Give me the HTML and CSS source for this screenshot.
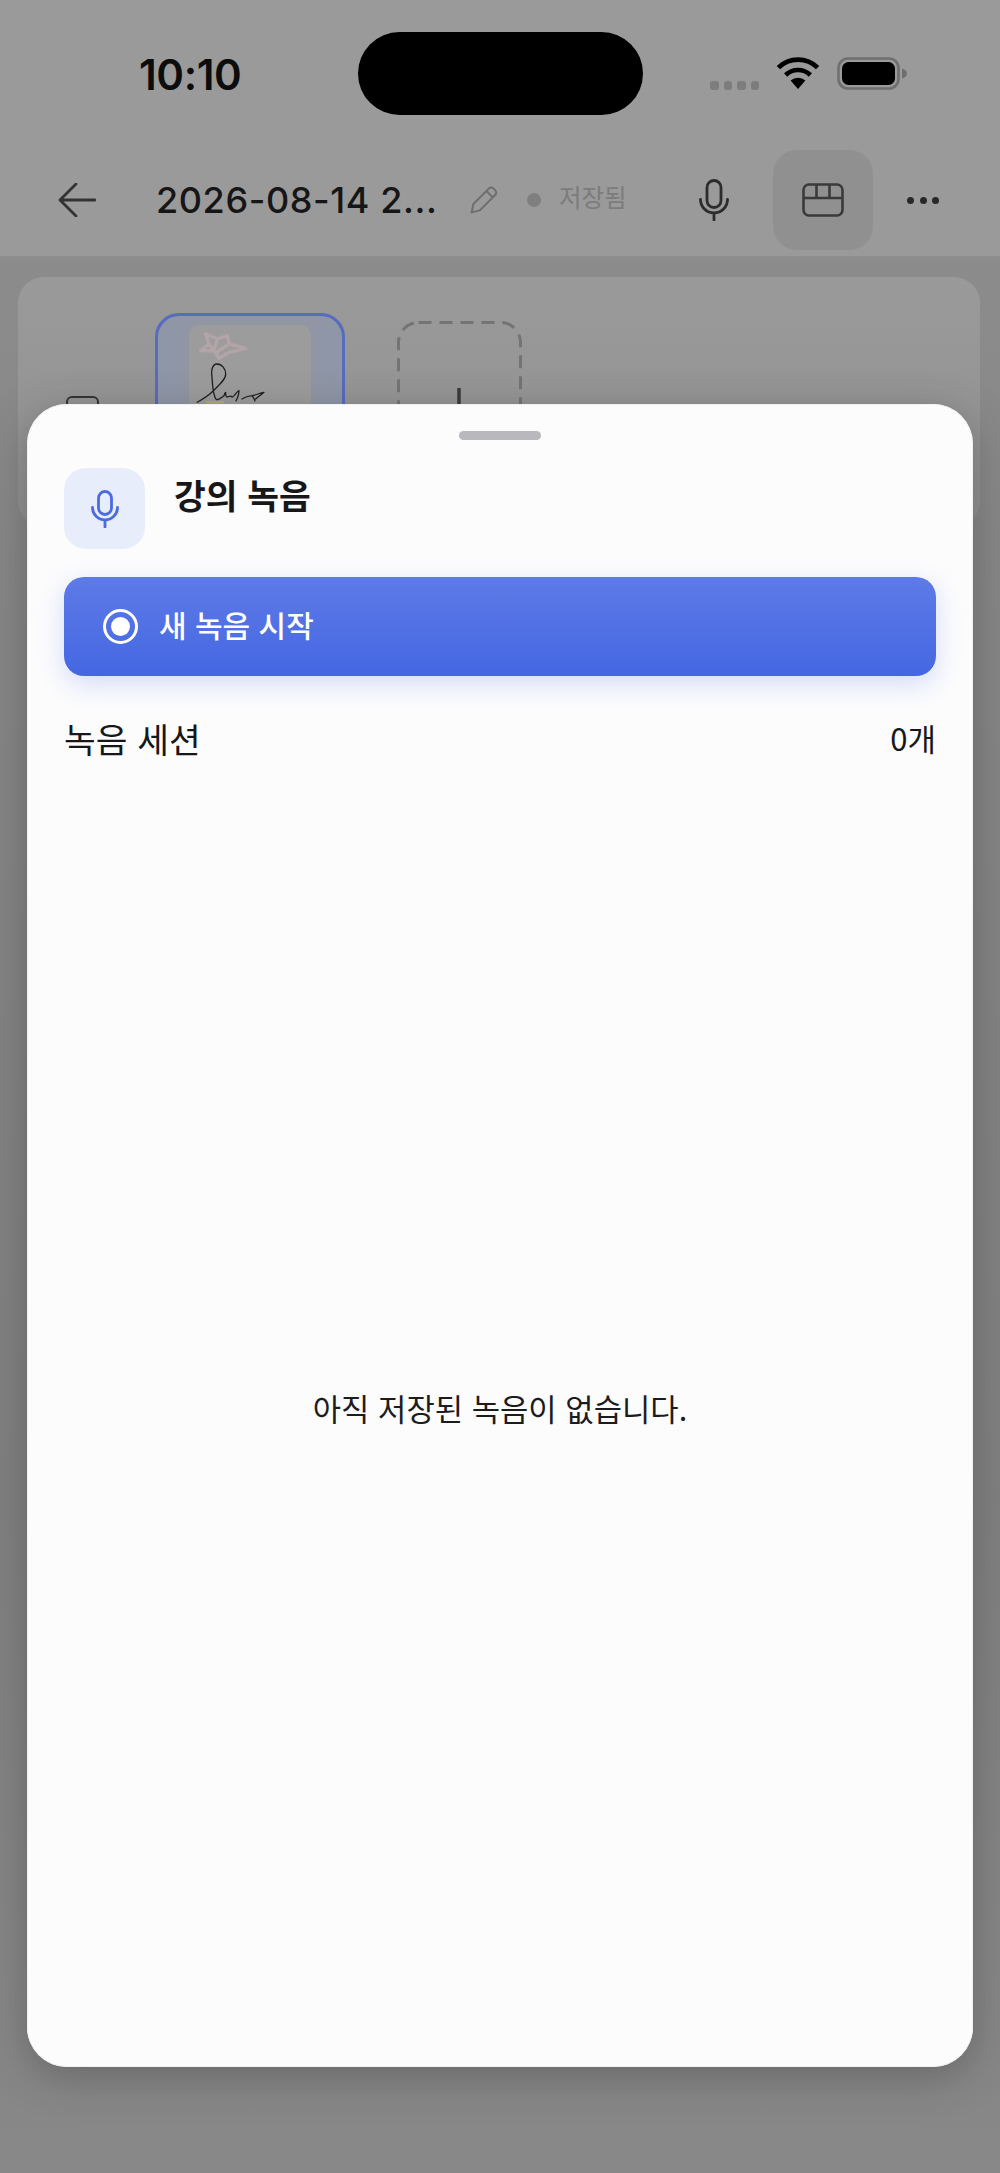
FILE: index.html
```html
<!DOCTYPE html>
<html lang="ko">
<head>
<meta charset="utf-8">
<title>강의 녹음</title>
<link rel="stylesheet" href="styles.css">
</head>
<body>
<div class="page">
  <div class="top">
    <div class="status">
      <span class="time">10:10</span>
      <div class="island"></div>
      <div class="status-icons">
        <div class="signal"><i></i><i></i><i></i><i></i></div>
        <svg class="wifi" viewBox="0 0 44 32"><path d="M22 32 L14.6 23.6 A11 11 0 0 1 29.4 23.6 Z" fill="#000"/><path d="M9.6 18 A18 18 0 0 1 34.4 18" fill="none" stroke="#000" stroke-width="4.6"/><path d="M2.4 10.6 A28 28 0 0 1 41.6 10.6" fill="none" stroke="#000" stroke-width="4.8"/></svg>
        <svg class="battery" viewBox="0 0 71 33"><rect x="1.5" y="1.5" width="60" height="30" rx="9.5" fill="none" stroke="#6f6f6f" stroke-width="2.6"/><rect x="5" y="5" width="53" height="23" rx="6.5" fill="#000"/><path d="M65 11.5 C68.5 12.5 70 14.5 70 16.5 C70 18.5 68.5 20.5 65 21.5 Z" fill="#6f6f6f"/></svg>
      </div>
    </div>
    <div class="toolbar">
      <svg class="back" viewBox="0 0 38 34"><path d="M37 17H2M18 1 2 17l16 16" fill="none" stroke="#333" stroke-width="2.8" stroke-linecap="round" stroke-linejoin="round"/></svg>
      <span class="doc-title">2026-08-14 2...</span>
      <svg class="pencil" viewBox="0 0 28 28"><path d="M1.6 26.4 3.4 18 18.8 2.6a3.4 3.4 0 0 1 4.8 0l1.6 1.6a3.4 3.4 0 0 1 0 4.8L9.8 24.4ZM16.4 5l6.6 6.6" fill="none" stroke="#6e6e6e" stroke-width="2" stroke-linejoin="round"/></svg>
      <span class="saved-dot"></span>
      <span class="saved">저장됨</span>
      <svg class="mic" viewBox="0 0 30 42"><rect x="8" y="1.5" width="14" height="27" rx="7" fill="none" stroke="#2c2c2c" stroke-width="2.8"/><path d="M1.5 20.5a13.5 13.5 0 0 0 27 0M15 34.5V41" fill="none" stroke="#2c2c2c" stroke-width="2.8" stroke-linecap="round"/></svg>
      <div class="layout-btn">
        <svg class="layout" viewBox="0 0 42 34"><path d="M7 1.5h28a5.5 5.5 0 0 1 5.5 5.5v20a5.5 5.5 0 0 1-5.5 5.5H7A5.5 5.5 0 0 1 1.5 27V7A5.5 5.5 0 0 1 7 1.5ZM1.5 15h39M14.5 1.5V15M27.5 1.5V15" fill="none" stroke="#3a3a3a" stroke-width="2.6"/></svg>
      </div>
      <div class="more"><i></i><i></i><i></i></div>
    </div>
  </div>
  <div class="panel">
    <div class="panel-icon"></div>
    <div class="thumb">
      <div class="thumb-page">
        <svg class="sketch" viewBox="0 0 122 112">
          <path d="M16.7 9 28.3 14l10-3.300L40 19l16.700 4.300L40 27.300 30 33.300 25 25.700H11.700L20 19ZM20 19l5 6.700M28.300 14 25 25.700M40 19l-12 8" fill="none" stroke="#b3a4a8" stroke-width="3.400" stroke-linecap="round" stroke-linejoin="round"/>
          <rect x="17" y="76" width="18" height="4" fill="#adad72"/>
          <path d="M8.300 77.300C14 74 19 71 23 67 29 61 36.700 55 36.700 49 36.700 44 33 39 28 39 23 39 22 46 23 52 23.500 60 24 66 25 69 26 73 27 75 28.300 74.700 31 74 33 72 35 70.700 35.500 69 36 67.500 36.700 67.300 36.500 70 37 72 38 72 40 72 41.500 70 43 72 45 72 48 66 50 65.700 50 68 49 72 47 76M53 74C56 72 60 71 63 70.700 67 70 71 68 75 67.300 72 70 69 72 66.700 74M63 70.700C64 72 65 73 66 76" fill="none" stroke="#1e1e1e" stroke-width="1.300" stroke-linecap="round" stroke-linejoin="round"/>
        </svg>
      </div>
    </div>
    <svg class="add" viewBox="0 0 125 170">
      <rect x="1.500" y="1.500" width="122" height="167" rx="20" fill="none" stroke="#747474" stroke-width="3" stroke-dasharray="13 8"/>
      <path d="M62 67v50" stroke="#3a3a3a" stroke-width="3.500"/>
    </svg>
  </div>
  <div class="sheet">
    <div class="grabber"></div>
    <div class="sheet-head">
      <div class="mic-tile">
        <svg viewBox="0 0 28 38"><rect x="7.5" y="1.5" width="13" height="23" rx="6.5" fill="none" stroke="#4a6ce0" stroke-width="2.8"/><path d="M1.5 17.5a12.5 12.5 0 0 0 25 0M14 30v7" fill="none" stroke="#4a6ce0" stroke-width="2.8" stroke-linecap="round"/></svg>
      </div>
      <h1 class="sheet-title">강의 녹음</h1>
    </div>
    <button class="record">
      <span class="rec-icon"><span></span></span>
      <span class="rec-label">새 녹음 시작</span>
    </button>
    <div class="session-row">
      <span class="session-label">녹음 세션</span>
      <span class="session-count">0개</span>
    </div>
    <div class="empty">아직 저장된 녹음이 없습니다.</div>
  </div>
</div>
</body>
</html>
```
FILE: styles.css
```css
* { box-sizing: border-box; }
html, body { margin: 0; padding: 0; }
body {
  font-family: "Noto Sans CJK KR", "Inter", sans-serif;
  background: #888889;
}
.page {
  position: relative;
  width: 1000px;
  height: 2173px;
  overflow: hidden;
  background: linear-gradient(180deg, #8c8c8d 257px, #868687 560px, #808081 1500px, #888889 2173px);
}
.top {
  height: 257px;
  background: #9a9a9a;
  border-bottom: 1px solid #8e8e8e;
}
.status {
  height: 144px;
  position: relative;
  display: flex;
  align-items: flex-start;
}
.time {
  margin: 49px 0 0 139px;
  font: 600 42px/52px "Inter", sans-serif;
  color: #0c0c0c;
  letter-spacing: -0.4px;
}
.island {
  position: absolute;
  left: 358px;
  top: 32px;
  width: 285px;
  height: 83px;
  border-radius: 42px;
  background: #000;
}
.status-icons {
  position: absolute;
  left: 710px;
  top: 57px;
  display: flex;
  align-items: flex-start;
}
.signal {
  display: flex;
  gap: 5px;
  margin-top: 24px;
  width: 66px;
}
.signal i {
  width: 8.5px;
  height: 8.5px;
  border-radius: 3px;
  background: #7d7d7d;
}
.wifi { width: 44px; height: 32px; display: block; }
.battery { width: 71px; height: 33px; margin-left: 17px; display: block; }
.toolbar {
  display: flex;
  align-items: center;
  height: 112px;
  padding-left: 58px;
}
.back { width: 38px; height: 34px; flex: none; }
.doc-title {
  margin-left: 60px;
  width: 282px;
  flex: none;
  font: 500 36px/44px "Inter", sans-serif;
  letter-spacing: 0.6px;
  color: #161616;
  white-space: nowrap;
}
.pencil { width: 28px; height: 28px; margin-left: 32px; flex: none; }
.saved-dot {
  width: 14px;
  height: 14px;
  border-radius: 50%;
  background: #7f7f7f;
  margin-left: 29px;
  flex: none;
}
.saved {
  margin-left: 18px;
  font-size: 24.5px;
  line-height: 30px;
  color: #7c7c7c;
  width: 66px;
  white-space: nowrap;
  margin-top: -6px;
}
.mic { width: 30px; height: 42px; margin-left: 74px; flex: none; }
.layout-btn {
  width: 100px;
  height: 100px;
  margin-left: 44px;
  border-radius: 24px;
  background: #909090;
  display: flex;
  align-items: center;
  justify-content: center;
  flex: none;
}
.layout { width: 42px; height: 34px; }
.more { display: flex; gap: 5.5px; margin-left: 34px; }
.more i { width: 7px; height: 7px; border-radius: 50%; background: #282828; }
.panel {
  margin: 20px 20px 0 18px;
  height: 250px;
  border-radius: 26px;
  background: linear-gradient(180deg, #9a9a9a, #909090);
  display: flex;
  align-items: flex-start;
  padding: 36px 0 0 48px;
}
.panel-icon {
  width: 33px;
  height: 40px;
  margin-top: 83px;
  border: 2.5px solid #333;
  border-radius: 6px;
}
.thumb {
  width: 190px;
  height: 190px;
  margin-left: 56px;
  border: 3.5px solid #566cbd;
  border-radius: 24px;
  background: linear-gradient(90deg, #8e96a8, #9196a3 20%, #9196a3 80%, #8e96a8);
  display: flex;
  justify-content: center;
  padding-top: 9px;
}
.thumb-page {
  width: 122px;
  height: 170px;
  border-radius: 10px;
  background: #9c9c9d;
  overflow: hidden;
}
.sketch { display: block; width: 122px; height: 112px; overflow: hidden; }
.add {
  display: block;
  flex: none;
  width: 125px;
  height: 170px;
  margin: 8px 0 0 52px;
}
.sheet {
  position: absolute;
  left: 27px;
  top: 404px;
  width: 946px;
  height: 1663px;
  border-radius: 40px;
  background: #fcfcfd;
  box-shadow: 0 10px 40px rgba(50, 50, 50, .35), inset 0 0 0 1px #f1f1f3;
  display: flex;
  flex-direction: column;
  padding: 27px 37px 0;
}
.grabber {
  width: 82px;
  height: 9px;
  border-radius: 5px;
  background: #b9b9bd;
  align-self: center;
}
.sheet-head {
  display: flex;
  align-items: flex-start;
  margin-top: 28px;
}
.mic-tile {
  width: 81px;
  height: 81px;
  border-radius: 22px;
  background: #e8edfb;
  display: flex;
  align-items: center;
  justify-content: center;
}
.mic-tile svg { width: 28px; height: 38px; }
.sheet-title {
  margin: 4px 0 0 29px;
  font-size: 34.5px;
  font-weight: 700;
  line-height: 44px;
  color: #17171a;
}
.record {
  margin-top: 28px;
  height: 99px;
  border: 0;
  border-radius: 20px;
  background: linear-gradient(180deg, #5e7ae7, #4467e2);
  box-shadow: 0 8px 26px rgba(68, 103, 226, .22);
  display: flex;
  align-items: center;
  gap: 21px;
  padding: 0 0 0 39px;
  color: #fff;
  font: 500 30px/40px "Noto Sans CJK KR", sans-serif;
}
.rec-label { margin-top: -6px; }
.rec-icon {
  width: 35px;
  height: 35px;
  border: 3px solid #fff;
  border-radius: 50%;
  display: flex;
  align-items: center;
  justify-content: center;
}
.rec-icon span {
  width: 19px;
  height: 19px;
  border-radius: 50%;
  background: #fff;
}
.session-row {
  margin-top: 39px;
  display: flex;
  justify-content: space-between;
  align-items: center;
  color: #17171a;
  font-size: 34.5px;
  line-height: 46px;
}
.session-label { font-weight: 400; }
.session-count { font-size: 31px; }
.empty {
  margin-top: 625px;
  text-align: center;
  font-size: 30.8px;
  line-height: 44px;
  color: #1c1c1f;
}
```
